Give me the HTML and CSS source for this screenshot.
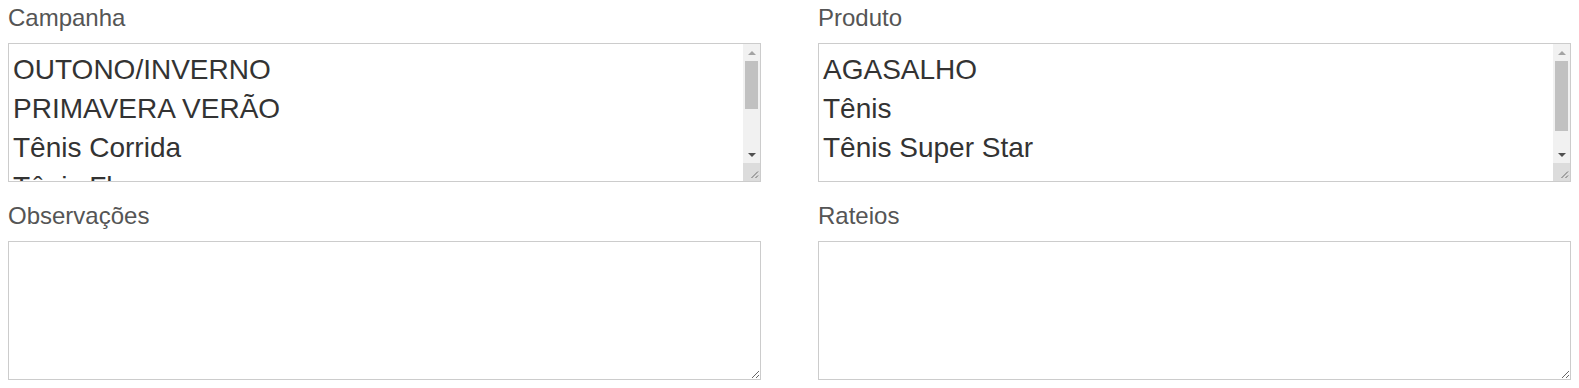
FILE: index.html
```html
<!DOCTYPE html>
<html lang="pt-BR">
<head>
<meta charset="utf-8">
<title>Formulário</title>
<link rel="stylesheet" href="styles.css">
</head>
<body>
<div class="form">
  <div class="field">
    <label class="label">Campanha</label>
    <div class="listbox">
      <ul class="options">
        <li>OUTONO/INVERNO</li>
        <li>PRIMAVERA VERÃO</li>
        <li>Tênis Corrida</li>
        <li>Tênis Flex</li>
      </ul>
      <div class="scrollbar">
        <div class="sb-btn"><span class="tri-up"></span></div>
        <div class="sb-track"><div class="sb-thumb"></div></div>
        <div class="sb-btn"><span class="tri-down"></span></div>
        <div class="sb-corner">
          <svg class="grip" width="17" height="17" viewBox="0 0 17 17"><path d="M15 8.5L8.5 15M15 12.5L12.5 15" stroke="#6b6b6b" stroke-width="1" fill="none"/></svg>
        </div>
      </div>
    </div>
  </div>
  <div class="field">
    <label class="label">Produto</label>
    <div class="listbox">
      <ul class="options">
        <li>AGASALHO</li>
        <li>Tênis</li>
        <li>Tênis Super Star</li>
      </ul>
      <div class="scrollbar">
        <div class="sb-btn"><span class="tri-up"></span></div>
        <div class="sb-track"><div class="sb-thumb long"></div></div>
        <div class="sb-btn"><span class="tri-down"></span></div>
        <div class="sb-corner">
          <svg class="grip" width="17" height="17" viewBox="0 0 17 17"><path d="M15 8.5L8.5 15M15 12.5L12.5 15" stroke="#6b6b6b" stroke-width="1" fill="none"/></svg>
        </div>
      </div>
    </div>
  </div>
  <div class="field">
    <label class="label">Observações</label>
    <textarea class="textarea"></textarea>
  </div>
  <div class="field">
    <label class="label">Rateios</label>
    <textarea class="textarea"></textarea>
  </div>
</div>
</body>
</html>
```

FILE: styles.css
```css
html, body {
  margin: 0;
  padding: 0;
  background: #ffffff;
}

.form {
  display: grid;
  grid-template-columns: 1fr 1fr;
  column-gap: 57px;
  row-gap: 20px;
  padding: 4px 8px 0 8px;
  font-family: "Liberation Sans", Arial, sans-serif;
}

.field {
  display: flex;
  flex-direction: column;
  min-width: 0;
}

.label {
  display: block;
  font-size: 24px;
  line-height: 28px;
  color: #555555;
  margin-bottom: 11px;
}

.listbox {
  display: flex;
  height: 139px;
  box-sizing: border-box;
  border: 1px solid #cccccc;
  background: #ffffff;
  overflow: hidden;
}

.options {
  flex: 1;
  list-style: none;
  margin: 0;
  padding: 6px 0 0 4px;
  overflow: hidden;
  font-size: 28px;
  line-height: 39px;
  color: #333333;
}

.options li {
  white-space: nowrap;
}

.scrollbar {
  width: 17px;
  flex: none;
  display: flex;
  flex-direction: column;
  background: #f1f1f1;
}

.sb-btn {
  height: 17px;
  flex: none;
  display: flex;
  align-items: center;
  justify-content: center;
}

.tri-up {
  width: 0;
  height: 0;
  border-left: 4px solid transparent;
  border-right: 4px solid transparent;
  border-bottom: 4px solid #a3a3a3;
}

.tri-down {
  width: 0;
  height: 0;
  border-left: 4px solid transparent;
  border-right: 4px solid transparent;
  border-top: 4px solid #505050;
}

.sb-track {
  flex: 1;
  padding: 0 2px;
}

.sb-thumb {
  height: 48px;
  background: #c1c1c1;
}

.sb-thumb.long {
  height: 70px;
}

.sb-corner {
  height: 18px;
  flex: none;
  background: #dcdcdc;
}

.grip {
  display: block;
}

.textarea {
  display: block;
  width: 100%;
  height: 139px;
  box-sizing: border-box;
  margin: 0;
  border: 1px solid #cccccc;
  padding: 6px;
  font-family: "Liberation Sans", Arial, sans-serif;
  font-size: 28px;
  color: #333333;
  background: #ffffff;
  resize: both;
  outline: none;
}
```
